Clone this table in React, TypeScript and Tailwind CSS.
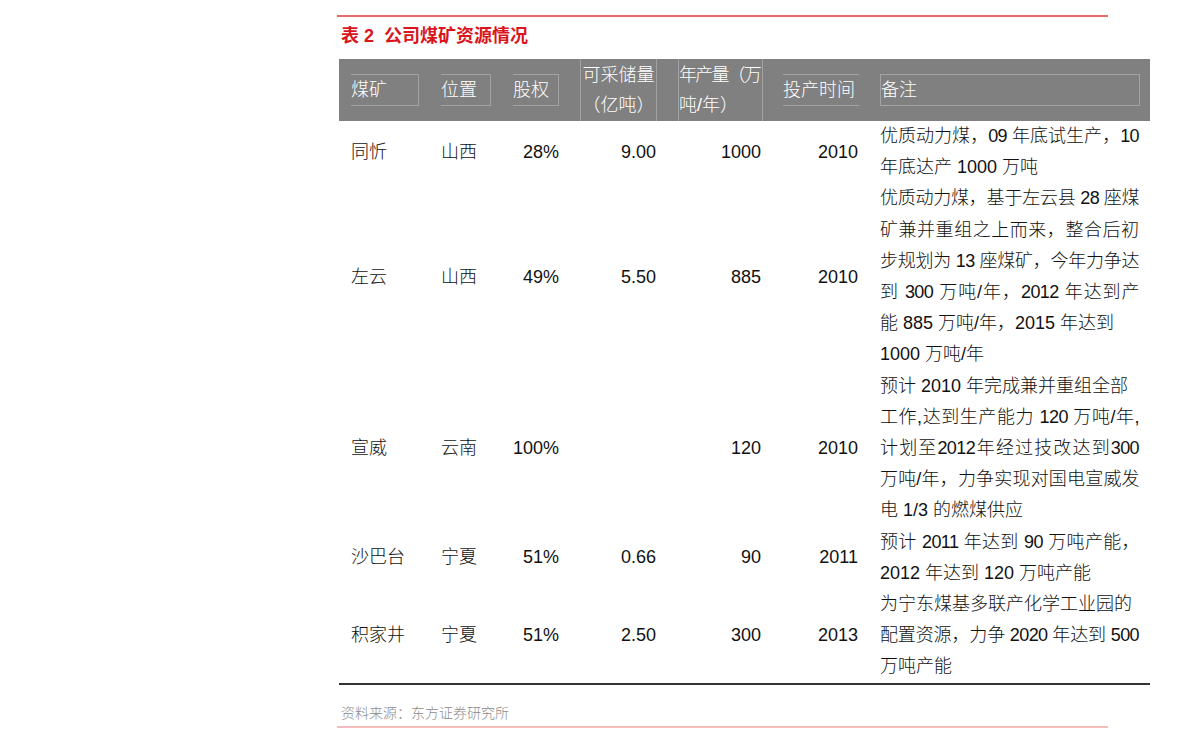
import React from "react";

type Line = { t: string; j?: boolean; tight?: boolean };
type Row = {
  name: string;
  loc: string;
  share: string;
  reserve: string;
  output: string;
  year: string;
  notes: Line[];
};

const rows: Row[] = [
  {
    name: "同忻",
    loc: "山西",
    share: "28%",
    reserve: "9.00",
    output: "1000",
    year: "2010",
    notes: [{ t: "优质动力煤，09 年底试生产，10", j: true, tight: true }, { t: "年底达产 1000 万吨" }],
  },
  {
    name: "左云",
    loc: "山西",
    share: "49%",
    reserve: "5.50",
    output: "885",
    year: "2010",
    notes: [
      { t: "优质动力煤，基于左云县 28 座煤", j: true, tight: true },
      { t: "矿兼并重组之上而来，整合后初", j: true },
      { t: "步规划为 13 座煤矿，今年力争达", j: true, tight: true },
      { t: "到 300 万吨/年，2012 年达到产", j: true, tight: true },
      { t: "能 885 万吨/年，2015 年达到" },
      { t: "1000 万吨/年" },
    ],
  },
  {
    name: "宣威",
    loc: "云南",
    share: "100%",
    reserve: "",
    output: "120",
    year: "2010",
    notes: [
      { t: "预计 2010 年完成兼并重组全部" },
      { t: "工作,达到生产能力 120 万吨/年,", j: true, tight: true },
      { t: "计划至2012年经过技改达到300", j: true, tight: true },
      { t: "万吨/年，力争实现对国电宣威发", j: true, tight: true },
      { t: "电 1/3 的燃煤供应" },
    ],
  },
  {
    name: "沙巴台",
    loc: "宁夏",
    share: "51%",
    reserve: "0.66",
    output: "90",
    year: "2011",
    notes: [{ t: "预计 2011 年达到 90 万吨产能，", j: true, tight: true }, { t: "2012 年达到 120 万吨产能" }],
  },
  {
    name: "积家井",
    loc: "宁夏",
    share: "51%",
    reserve: "2.50",
    output: "300",
    year: "2013",
    notes: [
      { t: "为宁东煤基多联产化学工业园的" },
      { t: "配置资源，力争 2020 年达到 500", j: true, tight: true },
      { t: "万吨产能" },
    ],
  },
];

const cols = "grid grid-cols-[90px_73px_67px_98px_105px_97px_281px]";

export default function App() {
  return (
    <div className="min-h-[740px] w-[1191px] bg-white font-['Liberation_Sans','Noto_Sans_CJK_SC',sans-serif] text-[#111]">
      <div className="flex flex-col pl-[337px] pt-[15px]">
        <div className="h-[2px] w-[771px] bg-[#e76a6c]" />
        <div className="mt-[7px] flex h-[24px] items-center pl-[4px] text-[18px] font-bold leading-[24px] text-[#d9161c]">
          <span>表 2</span>
          <span className="ml-[10px]">公司煤矿资源情况</span>
        </div>
        <div className="ml-[2px] mt-[11px] w-[811px]">
          {/* header */}
          <div className={`${cols} h-[62px] bg-[#808080] text-[18px] font-light text-white`}>
            <div className="flex items-center pl-[12px]">
              <div className="h-[32px] w-[68px] border-y border-r border-[#a3a3a3] leading-[30px]">煤矿</div>
            </div>
            <div className="flex items-center pl-[12px]">
              <div className="h-[32px] w-[50px] border-y border-r border-[#a3a3a3] leading-[30px]">位置</div>
            </div>
            <div className="flex items-center pl-[11px]">
              <div className="h-[32px] w-[46px] border-y border-r border-[#a3a3a3] leading-[30px]">股权</div>
            </div>
            <div className="flex pl-[11px]">
              <div className="flex w-[77px] flex-col items-center border-x border-[#a3a3a3] pt-[1px] leading-[30px]">
                <span className="whitespace-nowrap">可采储量</span>
                <span className="whitespace-nowrap">（亿吨）</span>
              </div>
            </div>
            <div className="flex pl-[11px]">
              <div className="flex w-[85px] flex-col border-x border-[#a3a3a3] pt-[1px] leading-[30px]">
                <span className="whitespace-nowrap tracking-[-1.8px]">年产量（万</span>
                <span className="whitespace-nowrap">吨/年）</span>
              </div>
            </div>
            <div className="flex items-center pl-[11px]">
              <div className="h-[32px] w-[76px] whitespace-nowrap border-y border-[#a3a3a3] leading-[30px]">投产时间</div>
            </div>
            <div className="flex items-center pl-[11px]">
              <div className="h-[32px] w-[260px] border border-[#a3a3a3] leading-[30px]">备注</div>
            </div>
          </div>
          {/* body */}
          <div className="border-b-2 border-[#333]">
            {rows.map((r) => (
              <div key={r.name} className={`${cols} text-[18px]`}>
                <div className="flex items-center pl-[12px] font-light">{r.name}</div>
                <div className="flex items-center pl-[12px] font-light">{r.loc}</div>
                <div className="flex items-center justify-end pr-[10px]">{r.share}</div>
                <div className="flex items-center justify-end pr-[11px]">{r.reserve}</div>
                <div className="flex items-center justify-end pr-[11px]">{r.output}</div>
                <div className="flex items-center justify-end pr-[11px]">{r.year}</div>
                <div className="flex flex-col pl-[11px] pr-[11px] font-light leading-[31.2px]">
                  {r.notes.map((l, i) =>
                    l.j ? (
                      <div
                        key={i}
                        className={
                          l.tight
                            ? "whitespace-nowrap text-justify tracking-[-0.6px] [text-align-last:justify]"
                            : "whitespace-nowrap text-justify [text-align-last:justify]"
                        }
                      >
                        {l.t}
                      </div>
                    ) : (
                      <div key={i} className="whitespace-nowrap">
                        {l.t}
                      </div>
                    )
                  )}
                </div>
              </div>
            ))}
          </div>
        </div>
        <div className="mt-[18px] h-[20px] pl-[4px] text-[14px] font-light leading-[20px] text-[#8a8a8a]">
          资料来源：东方证券研究所
        </div>
        <div className="mt-[3px] h-[2px] w-[771px] bg-[#f6bcbc]" />
      </div>
    </div>
  );
}
